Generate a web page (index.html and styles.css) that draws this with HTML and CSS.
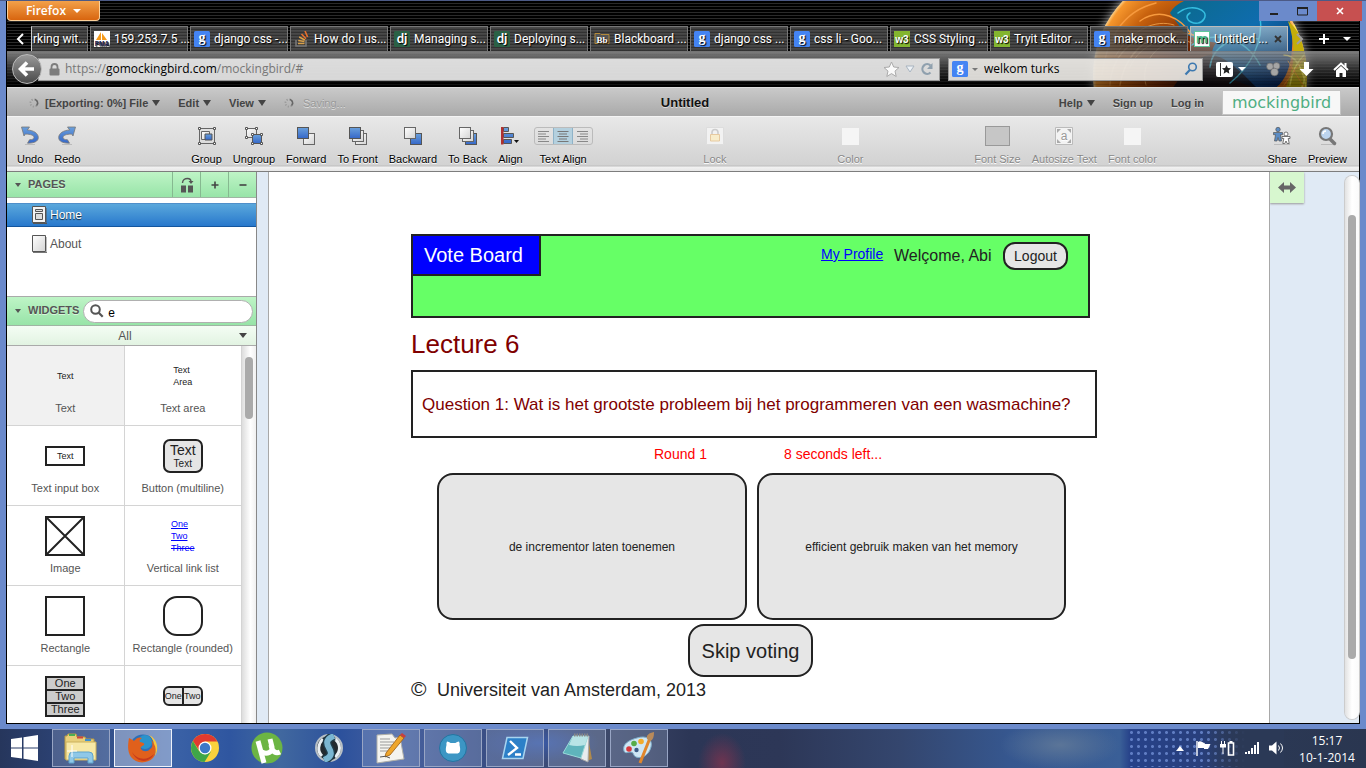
FILE: index.html
```html
<!DOCTYPE html>
<html lang="en">
<head>
<meta charset="utf-8">
<title>Untitled - Mockingbird</title>
<link rel="stylesheet" href="styles.css">
</head>
<body>
<svg class="defs" aria-hidden="true">
  <defs>
    <linearGradient id="blue" x1="0" y1="0" x2="0" y2="1"><stop offset="0" stop-color="#6aa0dc"/><stop offset="1" stop-color="#3567c8"/></linearGradient>
    <linearGradient id="pale" x1="0" y1="0" x2="1" y2="1"><stop offset="0" stop-color="#fff"/><stop offset="1" stop-color="#d4d4d4"/></linearGradient>
    <symbol id="spin" viewBox="0 0 10 10"><circle cx="5" cy="5" r="3.6" fill="none" stroke="#999" stroke-width="1.8" stroke-dasharray="1.2 1.6"/><path d="M6 1.5A3.6 3.6 0 0 1 7.5 7.6" fill="none" stroke="#666" stroke-width="1.6"/></symbol>
    <symbol id="goog" viewBox="0 0 16 16"><rect width="16" height="16" rx="1.5" fill="#4484f3"/><text x="8" y="11" text-anchor="middle" font-family="Liberation Serif, serif" font-weight="bold" font-size="14" fill="#fff">g</text></symbol>
    <symbol id="dj" viewBox="0 0 16 16"><rect width="16" height="16" rx="1.5" fill="#2b6145"/><text x="8" y="12" text-anchor="middle" font-family="Lato, sans-serif" font-weight="bold" font-size="13" fill="#fff">dj</text></symbol>
    <symbol id="w3" viewBox="0 0 16 16"><rect width="16" height="16" fill="#83b52f"/><text x="8" y="12" text-anchor="middle" font-family="Liberation Sans, sans-serif" font-weight="bold" font-size="10" fill="#fff">w3</text></symbol>
    <symbol id="sq" viewBox="0 0 12 12"><rect x=".5" y=".5" width="11" height="11" fill="url(#pale)" stroke="#666"/></symbol>
    <symbol id="sqb" viewBox="0 0 12 12"><rect x=".5" y=".5" width="11" height="11" fill="url(#blue)" stroke="#555"/></symbol>
  </defs>
</svg>

<div class="window">
 <div class="inner">
  <header class="chrome">
    <svg class="persona" viewBox="0 0 280 86" aria-hidden="true">
      <defs>
        <radialGradient id="ember" gradientUnits="userSpaceOnUse" cx="140" cy="74" r="108"><stop offset="0" stop-color="#2a0f04"/><stop offset=".35" stop-color="#7a2a04"/><stop offset=".75" stop-color="#c8620e"/><stop offset=".96" stop-color="#f6962c"/><stop offset="1" stop-color="#ffe0a0"/></radialGradient>
        <linearGradient id="sea" x1="0" y1="0" x2="1" y2="1"><stop offset="0" stop-color="#0a6a88"/><stop offset=".5" stop-color="#0f6cae"/><stop offset="1" stop-color="#081c58"/></linearGradient>
        <filter id="soft" x="-20%" y="-20%" width="140%" height="140%"><feGaussianBlur stdDeviation="5"/></filter>
        <clipPath id="ball"><circle cx="140" cy="74" r="107"/></clipPath>
      </defs>
      <circle cx="140" cy="74" r="108" fill="#fff" opacity=".55" filter="url(#soft)"/>
      <circle cx="140" cy="74" r="107" fill="url(#ember)"/>
      <g clip-path="url(#ball)">
        <path d="M110 12C118-4 150-10 190-6s44 30 42 54-10 40-28 44c-10-8-30-10-40-20s-16-20-8-30c-14-4-30-4-36-16z" fill="url(#sea)"/>
        <path d="M150 54c16 0 34 20 50 36h-90c8-8 20-34 40-36z" fill="#0a0b14" opacity=".85"/>
        <path d="M228 20c22 20 24 44 18 70h-22c12-24 12-46 4-70z" fill="#c4ae0a"/>
        <g fill="none" stroke-linecap="round">
          <path d="M42 74C46 40 62 10 96 2M50 84c2-34 30-56 66-50M60 84c8-50 60-64 84-44M80 20c20-14 40-4 52 14" stroke="#f79a3e" stroke-width="1.5"/>
          <path d="M70 66c10-24 40-34 62-24M86 84c-6-20 8-44 40-46M56 54c16-26 40-36 58-30" stroke="#ffb45a" opacity=".7"/>
          <path d="M118 12c12-10 32-4 26 6s-24 0-14-6M132 44c20-14 52-10 68 20M150 66c2-20 24-34 48-28M170 82c20-16 34-40 30-68" stroke="#35bde0" stroke-width="1.5"/>
          <path d="M234 24c14 18 16 40 8 62M224 54c10 0 18 10 22 32M230 84c2-16 8-24 14-30" stroke="#fff04a" stroke-width="1.5"/>
          <path d="M224 84l22-30M228 60l16 26" stroke="#ff9a1e"/>
        </g>
      </g>
    </svg>
    <div class="titlebar">
      <button class="firefox">Firefox <span class="tri"></span></button>
      <div class="winctl">
        <button class="wc" aria-label="Minimize"><svg width="10" height="12" viewBox="0 0 10 12"><path d="M1 9h8" stroke="#222" stroke-width="2"/></svg></button>
        <button class="wc" aria-label="Maximize"><svg width="11" height="9" viewBox="0 0 11 9"><path d="M.5 1h10v7H.5z" fill="none" stroke="#222"/><path d="M0 1h11" stroke="#222" stroke-width="2"/></svg></button>
        <button class="wc close" aria-label="Close"><svg width="8" height="8" viewBox="0 0 8 8"><path d="M1 1l6 6M7 1L1 7" stroke="#fff" stroke-width="1.6"/></svg></button>
      </div>
    </div>
    <div class="tabs" role="tablist">
      <button class="scroll" aria-label="Scroll left"><svg width="8" height="12" viewBox="0 0 8 12"><path d="M7 1L2 6l5 5" fill="none" stroke="#fff" stroke-width="2"/></svg></button>
      <button class="tab cut" role="tab">rking wit...</button>
      <button class="tab" role="tab"><svg class="fav" viewBox="0 0 16 16"><path d="M0 0h16v16H0z" fill="#fff"/><path d="M2 9L7 1v8zM8 9V2l5 7z" fill="#f59b1c"/><text x="8" y="15" text-anchor="middle" font-family="Liberation Sans, sans-serif" font-weight="bold" font-size="6.500" fill="#222250">PMA</text></svg>159.253.7.5 ...</button>
      <button class="tab" role="tab"><svg class="fav"><use href="#goog"/></svg>django css -...</button>
      <button class="tab" role="tab"><svg class="fav" viewBox="0 0 16 16"><path d="M2 9v6h10V9" fill="none" stroke="#777" stroke-width="1.6"/><path d="M4 12.5h6.500M4.200 9.500l6.300 1M5.200 6l5.700 3" stroke="#d8a04a" stroke-width="1.500"/><path d="M7.500 3l4.500 4.800M11 0l2.600 6" stroke="#e8702c" stroke-width="1.600"/></svg>How do I us...</button>
      <button class="tab" role="tab"><svg class="fav"><use href="#dj"/></svg>Managing s...</button>
      <button class="tab" role="tab"><svg class="fav"><use href="#dj"/></svg>Deploying s...</button>
      <button class="tab" role="tab"><svg class="fav" viewBox="0 0 16 16"><path d="M1 2.500h5l1 1h8v9H1z" fill="#555" stroke="#b48a3a"/><text x="8" y="11.500" text-anchor="middle" font-family="Liberation Serif, serif" font-weight="bold" font-size="9" fill="#fff">Bb</text></svg>Blackboard ...</button>
      <button class="tab" role="tab"><svg class="fav"><use href="#goog"/></svg>django css ...</button>
      <button class="tab" role="tab"><svg class="fav"><use href="#goog"/></svg>css li - Goo...</button>
      <button class="tab" role="tab"><svg class="fav"><use href="#w3"/></svg>CSS Styling ...</button>
      <button class="tab" role="tab"><svg class="fav"><use href="#w3"/></svg>Tryit Editor ...</button>
      <button class="tab" role="tab"><svg class="fav"><use href="#goog"/></svg>make mock...</button>
      <button class="tab active" role="tab" aria-selected="true"><svg class="fav" viewBox="0 0 16 16"><rect x=".5" y=".5" width="15" height="15" fill="#fff" stroke="#5fc79b"/><text x="8" y="12" text-anchor="middle" font-family="Open Sans, sans-serif" font-weight="bold" font-size="12" fill="#49b98a">m</text></svg><span class="tabname">Untitled ...</span><svg width="8" height="8" viewBox="0 0 8 8"><path d="M1 1l6 6M7 1L1 7" stroke="#333" stroke-width="1.800"/></svg></button>
      <div class="tabend">
        <button class="bare" aria-label="Scroll right"><svg width="8" height="12" viewBox="0 0 8 12"><path d="M1 1l5 5-5 5" fill="none" stroke="#a0a0a0" stroke-width="2"/></svg></button>
        <button class="bare" aria-label="New tab"><svg width="12" height="12" viewBox="0 0 12 12"><path d="M6 1v10M1 6h10" stroke="#fff" stroke-width="2"/></svg></button>
        <button class="bare" aria-label="All tabs"><span class="tri"></span></button>
      </div>
    </div>
    <div class="nav">
      <button class="back" aria-label="Back"><svg width="18" height="18" viewBox="0 0 18 18"><path d="M9 2.500L2.500 9 9 15.500M3 9h13" fill="none" stroke="#fff" stroke-width="3.600"/></svg></button>
      <div class="url">
        <svg width="11" height="13" viewBox="0 0 11 13"><path d="M2.500 6V4a3 3 0 0 1 6 0v2" fill="none" stroke="#7d7d7d" stroke-width="1.800"/><rect x=".5" y="5.500" width="10" height="7" rx="1" fill="#7d7d7d"/></svg>
        <div class="address" role="textbox" aria-label="Address" contenteditable="true">https://<b>gomockingbird.com</b>/mockingbird/#</div>
        <svg width="17" height="17" viewBox="0 0 17 17"><path d="M8.500 1l2.200 5 5.300.5-4 3.600 1.200 5.400-4.700-2.900-4.700 2.900L5 10.100 1 6.500 6.300 6z" fill="#fafafa" stroke="#aaa"/></svg>
        <svg width="10" height="8" viewBox="0 0 10 8"><path d="M1 1h8L5 7z" fill="#eef2f6" stroke="#a8b4c0"/></svg>
        <svg width="14" height="14" viewBox="0 0 14 14"><path d="M10.500 10.500A4.800 4.800 0 1 1 10.500 3.500" fill="none" stroke="#8fa0ae" stroke-width="2.200"/><path d="M12.500 1v6H7z" fill="#8fa0ae"/></svg>
      </div>
      <div class="find">
        <svg class="fav"><use href="#goog"/></svg><span class="tri grey"></span>
        <input class="q" type="text" aria-label="Search the web" value="welkom turks">
        <svg width="14" height="14" viewBox="0 0 14 14"><circle cx="8.500" cy="5" r="3.800" fill="none" stroke="#3d79b0" stroke-width="1.600"/><path d="M5.800 8L1.500 12.500" stroke="#3d79b0" stroke-width="2.200"/></svg>
      </div>
      <div class="navicons">
        <button class="bare mark" aria-label="Bookmarks"><svg width="17" height="15" viewBox="0 0 17 15"><rect width="17" height="15" rx="2" fill="#fff"/><path d="M4.500 1v13" stroke="#333"/><path d="M10.500 3l1.400 3 3.100.3-2.300 2.200.7 3.300-2.900-1.700-2.900 1.700.7-3.300L6 6.300 9.100 6z" fill="#222"/></svg><span class="tri"></span></button>
        <button class="bare" aria-label="Add-on"><svg width="15" height="15" viewBox="0 0 15 15"><g fill="#a5a5a5" stroke="#666" stroke-width=".6"><circle cx="4" cy="4.500" r="3.400"/><circle cx="10.500" cy="4" r="3.400"/><circle cx="8.500" cy="10" r="3.800"/></g></svg></button>
        <button class="bare" aria-label="Downloads"><svg width="16" height="16" viewBox="0 0 16 16"><path d="M5 1h5v7h4.500L7.500 15 .5 8H5z" fill="#fff"/></svg></button>
        <button class="bare" aria-label="Home"><svg width="16" height="15" viewBox="0 0 16 15"><path d="M1 8l7-6.500L15 8" fill="none" stroke="#fff" stroke-width="2"/><path d="M3 8.500L8 4l5 4.500V15h-3.500v-4h-3v4H3zM11.500 1h2v4h-2z" fill="#fff"/></svg></button>
      </div>
    </div>
  </header>

  <nav class="menubar">
    <div class="menus">
      <svg class="spin"><use href="#spin"/></svg>
      <button class="menu">[Exporting: 0%] File <span class="tri dark"></span></button>
      <button class="menu">Edit <span class="tri dark"></span></button>
      <button class="menu">View <span class="tri dark"></span></button>
      <svg class="spin"><use href="#spin"/></svg>
      <span class="saving">Saving...</span>
    </div>
    <h1 class="doc">Untitled</h1>
    <div class="menus end">
      <button class="menu">Help <span class="tri dark"></span></button>
      <a class="menu" href="#signup">Sign up</a>
      <a class="menu" href="#login">Log in</a>
      <a class="brand" href="#home">mockingbird</a>
    </div>
  </nav>

  <div class="toolbar">
    <div class="group">
      <button class="tool"><svg width="20" height="20" viewBox="0 0 20 20"><path d="M5 18.500h10" stroke="#bbb"/><path d="M1.500 1h8L7.300 4c6.200.2 11 3.400 11 7.600 0 3.600-3.800 5.600-10.800 5.600l2-3.400c3-.2 4.500-1 4.500-2.400 0-2-3-3.300-8.800-3.300L4 10z" fill="url(#blue)" stroke="#777" stroke-width=".8"/></svg>Undo</button>
      <button class="tool"><svg width="20" height="20" viewBox="0 0 20 20"><path d="M5 18.500h10" stroke="#bbb"/><path d="M18.500 1h-8l2.200 3c-6.200.2-11 3.400-11 7.600 0 3.600 3.800 5.600 10.800 5.600l-2-3.400c-3-.2-4.500-1-4.500-2.400 0-2 3-3.300 8.800-3.300L16 10z" fill="url(#blue)" stroke="#777" stroke-width=".8"/></svg>Redo</button>
    </div>
    <div class="group">
      <button class="tool"><svg width="20" height="20" viewBox="0 0 20 20"><path d="M2.500 2.500h15v15h-15z" fill="none" stroke="#666"/><path d="M4.500 5.500h8v8h-8z" fill="url(#pale)" stroke="#666"/><path d="M8 8h7v6H8z" fill="url(#blue)" stroke="#555"/><path d="M1.500 1.500h2v2h-2zM16.500 1.500h2v2h-2zM1.500 16.500h2v2h-2zM16.500 16.500h2v2h-2z" fill="#fff" stroke="#555"/></svg>Group</button>
      <button class="tool"><svg width="20" height="20" viewBox="0 0 20 20"><path d="M2.500 2.500h10v9h-10z" fill="url(#pale)" stroke="#666"/><path d="M8.500 8.500h9v9h-9z" fill="url(#blue)" stroke="#555"/><path d="M1.500 1.500h2v2h-2zM11.500 1.500h2v2h-2zM1.500 10.500h2v2h-2zM7.500 7.500h2v2h-2zM16.500 7.500h2v2h-2zM7.500 16.500h2v2h-2zM16.500 16.500h2v2h-2z" fill="#fff" stroke="#555"/></svg>Ungroup</button>
      <button class="tool"><svg width="20" height="20" viewBox="0 0 20 20"><use href="#sq" x="7" y="7" width="12" height="12"/><use href="#sqb" x="1" y="1" width="12" height="12"/></svg>Forward</button>
      <button class="tool"><svg width="20" height="20" viewBox="0 0 20 20"><use href="#sq" x="7" y="7" width="12" height="12"/><use href="#sq" x="4" y="4" width="12" height="12"/><use href="#sqb" x="1" y="1" width="12" height="12"/></svg>To Front</button>
      <button class="tool"><svg width="20" height="20" viewBox="0 0 20 20"><use href="#sqb" x="7" y="7" width="12" height="12"/><use href="#sq" x="1" y="1" width="12" height="12"/></svg>Backward</button>
      <button class="tool"><svg width="20" height="20" viewBox="0 0 20 20"><use href="#sqb" x="7" y="7" width="12" height="12"/><use href="#sq" x="4" y="4" width="12" height="12"/><use href="#sq" x="1" y="1" width="12" height="12"/></svg>To Back</button>
      <button class="tool"><svg width="20" height="20" viewBox="0 0 20 20"><path d="M3.500 1.500h5v4h-5zM3.500 7.500h10v4h-10zM3.500 13.500h8v4h-8z" fill="url(#blue)" stroke="#555"/><path d="M1 1h2.500v17.500H1z" fill="#b03030"/><path d="M14 14h5l-2.500 3z" fill="#111"/></svg>Align</button>
      <div class="tool">
        <div class="seg" role="group" aria-label="Text Align">
          <button class="segbtn" aria-label="Left"><svg width="12" height="11" viewBox="0 0 12 11"><path d="M0 .5h11M0 3h8M0 5.500h11M0 8h8M0 10.500h11" stroke="#888"/></svg></button>
          <button class="segbtn on" aria-label="Center"><svg width="12" height="11" viewBox="0 0 12 11"><path d="M.5 .5h11M2 3h8M.5 5.500h11M2 8h8M.5 10.500h11" stroke="#777"/></svg></button>
          <button class="segbtn" aria-label="Right"><svg width="12" height="11" viewBox="0 0 12 11"><path d="M1 .5h11M4 3h8M1 5.500h11M4 8h8M1 10.500h11" stroke="#888"/></svg></button>
        </div>Text Align
      </div>
    </div>
    <div class="group"><button class="tool off" disabled><svg width="20" height="20" viewBox="0 0 20 20"><path d="M1.500 1.500h17v17h-17z" fill="#f2f2f2" stroke="#ddd"/><path d="M7 9V6.500a3 3 0 0 1 6 0V9" fill="none" stroke="#ccc" stroke-width="1.600"/><path d="M5.500 8.500h9v6.500h-9z" fill="#f8edcb" stroke="#e6c9a0"/></svg>Lock</button></div>
    <div class="group"><button class="tool off" disabled><svg width="20" height="20" viewBox="0 0 20 20"><path d="M2 2h17v17H2z" fill="#f5f5f5"/></svg>Color</button></div>
    <div class="group">
      <label class="tool off"><input class="size" type="text" disabled>Font Size</label>
      <button class="tool off" disabled><svg width="20" height="20" viewBox="0 0 20 20"><path d="M1.500 1.500h17v17h-17z" fill="#f3f3f3" stroke="#bbb"/><path d="M3 3h4L3 7zM17 3v4l-4-4zM3 17v-4l4 4zM17 17h-4l4-4z" fill="#aaa"/><text x="10" y="14" text-anchor="middle" font-family="Liberation Sans, sans-serif" font-size="12" fill="#999">a</text></svg>Autosize Text</button>
      <button class="tool off" disabled><svg width="20" height="20" viewBox="0 0 20 20"><path d="M2 2h17v17H2z" fill="#f5f5f5"/></svg>Font color</button>
    </div>
    <div class="group">
      <button class="tool"><svg width="20" height="20" viewBox="0 0 20 20"><path d="M2 18.500h16" stroke="#bbb"/><circle cx="6" cy="3.500" r="2.200" fill="#5b8cc4" stroke="#555" stroke-width=".7"/><path d="M1.500 6.500h9v2.200H8.500L9.500 15H7l-1-3.500L5 15H2.500l1-6.300h-2z" fill="#5b8cc4" stroke="#555" stroke-width=".7"/><circle cx="14" cy="8" r="2" fill="#fff" stroke="#555" stroke-width=".8"/><path d="M10 10.500h8v2h-1.800l1 5h-2L14 15l-1.200 2.500h-2l1-5H10z" fill="#fff" stroke="#555" stroke-width=".8"/></svg>Share</button>
      <button class="tool"><svg width="20" height="20" viewBox="0 0 20 20"><path d="M4 18.500h12" stroke="#bbb"/><path d="M12.500 12.500l5 5" stroke="#777" stroke-width="3.500" stroke-linecap="round"/><circle cx="9" cy="8" r="6" fill="#bcd4ee" stroke="#777" stroke-width="2.200"/><path d="M6 8a3 3 0 0 1 3-3" fill="none" stroke="#fff" stroke-width="1.500"/></svg>Preview</button>
    </div>
  </div>

  <main class="work">
    <aside class="side">
      <div class="shead">
        <span class="tri tiny"></span><h2 class="stitle">Pages</h2>
        <div class="pagebtns">
          <button class="pb" aria-label="Move page"><svg width="14" height="16" viewBox="0 0 14 16"><path d="M1 8.500h5v7H1zM8 8.500h5v7H8z" fill="#555"/><path d="M2.500 6C2.500 3 5 1.500 7.500 1.500S11 3 11 5" fill="none" stroke="#555" stroke-width="1.400"/><path d="M8.500 4h5L11 7z" fill="#555"/></svg></button>
          <button class="pb" aria-label="Add page"><svg width="8" height="8" viewBox="0 0 8 8"><path d="M4 .5v7M.5 4h7" stroke="#444" stroke-width="1.600"/></svg></button>
          <button class="pb" aria-label="Remove page"><svg width="8" height="8" viewBox="0 0 8 8"><path d="M.5 4h7" stroke="#444" stroke-width="1.600"/></svg></button>
        </div>
      </div>
      <ul class="pages">
        <li><a class="pg on" href="#p1"><svg width="15" height="18" viewBox="0 0 15 18"><path d="M.5 .5h13v16H.5z" fill="#f4f4f4" stroke="#555"/><path d="M1 17.500h14V2" fill="none" stroke="#555"/><path d="M3.500 3.500h7v2h-7zM3.500 7.500h7v6h-7z" fill="#ddd" stroke="#555"/></svg>Home</a></li>
        <li><a class="pg" href="#p2"><svg width="15" height="18" viewBox="0 0 15 18"><path d="M.5 .5h13v16H.5z" fill="url(#pale)" stroke="#555"/><path d="M1 17.500h14V2" fill="none" stroke="#777"/></svg>About</a></li>
      </ul>
      <div class="shead widgets">
        <span class="tri tiny"></span><h2 class="stitle">Widgets</h2>
        <label class="wsearch"><svg width="14" height="14" viewBox="0 0 14 14"><circle cx="5.500" cy="5.500" r="4.300" fill="none" stroke="#555" stroke-width="2"/><path d="M8.700 8.700l4 4" stroke="#555" stroke-width="2.200"/></svg><input class="wq" type="text" aria-label="Find widgets" value="e"></label>
      </div>
      <button class="all"><span>All</span><span class="tri dark big"></span></button>
      <div class="list">
        <div class="grid">
          <div class="w sel"><div class="pic t9">Text</div>Text</div>
          <div class="w"><div class="pic t9"><span>Text<br>Area</span></div>Text area</div>
          <div class="w"><div class="pic t9"><span class="boxed">Text</span></div>Text input box</div>
          <div class="w"><div class="pic"><span class="multi"><span>Text</span><small>Text</small></span></div>Button (multiline)</div>
          <div class="w"><div class="pic"><svg width="40" height="40" viewBox="0 0 40 40"><path d="M1 1h38v38H1zM1 1l38 38M39 1L1 39" fill="none" stroke="#222" stroke-width="2"/></svg></div>Image</div>
          <div class="w"><div class="pic t9"><span class="links"><a href="#1">One</a><a href="#2">Two</a><a class="last" href="#3">Three</a></span></div>Vertical link list</div>
          <div class="w"><div class="pic"><span class="rect"></span></div>Rectangle</div>
          <div class="w"><div class="pic"><span class="rect round"></span></div>Rectangle (rounded)</div>
          <div class="w"><div class="pic"><span class="stack"><span>One</span><span>Two</span><span>Three</span></span></div></div>
          <div class="w"><div class="pic t9"><span class="duo"><span>One</span><span>Two</span></span></div></div>
        </div>
        <div class="track"><div class="thumb short"></div></div>
      </div>
    </aside>

    <section class="canvas">
      <div class="sheet">
        <div class="item banner"></div>
        <div class="item logo">Vote Board</div>
        <a class="item profile" href="#profile">My Profile</a>
        <div class="item welcome">Welçome, Abi</div>
        <button class="item btn logout">Logout</button>
        <h2 class="item lecture">Lecture 6</h2>
        <div class="item question">Question 1: Wat is het grootste probleem bij het programmeren van een wasmachine?</div>
        <div class="item red roundno">Round 1</div>
        <div class="item red timer">8 seconds left...</div>
        <button class="item btn answer first">de incrementor laten toenemen</button>
        <button class="item btn answer second">efficient gebruik maken van het memory</button>
        <button class="item btn skip">Skip voting</button>
        <div class="item copy">©</div>
        <div class="item uva">Universiteit van Amsterdam, 2013</div>
      </div>
      <div class="gutter"><button class="handle" aria-label="Resize"><svg width="18" height="11" viewBox="0 0 18 11"><path d="M0 5.500L6 0v3.500h6V0l6 5.500L12 11V7.500H6V11z" fill="#666"/></svg></button></div>
      <div class="track main"><div class="thumb long"></div></div>
    </section>
  </main>
 </div>
</div>

<footer class="taskbar">
  <button class="start" aria-label="Start"><svg width="27" height="26" viewBox="0 0 27 26"><path d="M0 4l11-1.600v10H0zM12.500 2.200L27 0v12.400H12.500zM0 13.600h11v10L0 22zM12.500 13.600H27V26l-14.500-2.200z" fill="#fff"/></svg></button>
  <button class="task open" aria-label="File Explorer"><svg width="34" height="32" viewBox="0 0 34 32"><path d="M1 4h2l1-2h8l1 3h8l1 2h8v20H1z" fill="#e8cf7a" stroke="#b99a44"/><path d="M5 3h6" stroke="#4caf50" stroke-width="2"/><path d="M13 5.500h6" stroke="#d0453c" stroke-width="2"/><path d="M21 8h6" stroke="#3d8ed0" stroke-width="2"/><path d="M2 10h30v18H2z" fill="#f7e8a6" stroke="#cbb05c"/><path d="M5 31V24q0-4 4-4h16q4 0 4 4v7h-5v-5H10v5z" fill="#8fc8e8" stroke="#5fa3cc"/><path d="M8 13v12M3 19h10" stroke="#fff"/></svg></button>
  <button class="task open current" aria-label="Firefox"><svg width="32" height="32" viewBox="0 0 32 32"><circle cx="16" cy="16" r="13.500" fill="#2d6fb8"/><circle cx="18" cy="10" r="7" fill="#2a93cc"/><path d="M2 6c2 1 4 2 5 3 3-4 6-4 8-3-2 1-3 3-2 4 3 1 5 1 4 3-2 1-4 2-3 4 2 3 7 3 9 0 3-1 3-6 1-9 5 3 7 12 2 18-6 6-17 6-22-1C0 19 1 12 2 6z" fill="#e0601c"/><path d="M22 3c9 4 10 15 6 21 1-5 1-9-1-12-1-4-2-6-5-9z" fill="#f8c63c"/><path d="M5 20c5 8 15 9 22 2-4 9-17 10-22-2z" fill="#c73a1c"/></svg></button>
  <button class="task" aria-label="Chrome"><svg width="28" height="28" viewBox="0 0 28 28"><circle cx="14" cy="14" r="14" fill="#fbd23c"/><path d="M14 7.500h12.400A14 14 0 0 0 1.900 7L8 16z" fill="#e03a30"/><path d="M1.900 7A14 14 0 0 0 13.500 28L20 17.500 14 20.500 8 17z" fill="#3fa648"/><circle cx="14" cy="14" r="6.500" fill="#fff"/><circle cx="14" cy="14" r="5.200" fill="#3c78c8"/></svg></button>
  <button class="task" aria-label="uTorrent"><svg width="32" height="32" viewBox="0 0 32 32"><circle cx="16" cy="16" r="15.500" fill="#6cb544"/><g fill="none" stroke="#fff" stroke-width="5"><path d="M7 9l6 22"/><path d="M11 20c5 3 11 0 10-5L19 7M20 13c1 7 5 9 9 7"/></g></svg></button>
  <button class="task" aria-label="SopCast"><svg width="28" height="28" viewBox="0 0 28 28"><circle cx="14" cy="14" r="13" fill="#222a30" stroke="#b8c0c6" stroke-width="2"/><path d="M8 5c-5 5-6 12-1 17M20 5c6 5 6 13 0 18" fill="none" stroke="#e8eef2" stroke-width="3"/><path d="M19 2c-8 3-8 7-5 12s3 9-5 12" fill="none" stroke="#1f3a48" stroke-width="9"/><path d="M19 2c-8 3-8 7-5 12s3 9-5 12" fill="none" stroke="#7ab6d2" stroke-width="6"/></svg></button>
  <button class="task open" aria-label="Editor"><svg width="30" height="32" viewBox="0 0 30 32"><path d="M1 3l15-1 3 4 5-1 4 22-27 4z" fill="#f4f4f0" stroke="#b0b0a8"/><path d="M4 7h10M4 10h14M4 13h12M4 16h11M4 19h8" stroke="#999"/><path d="M10 21L24 3l4 3-14 17-5 2z" fill="#eea62c" stroke="#9a5a10" stroke-width=".8"/><path d="M24 3l2-2 4 3-2 2z" fill="#c8403c"/><path d="M4 25q6-2 10 1" fill="none" stroke="#555"/></svg></button>
  <button class="task open" aria-label="GitHub"><svg width="28" height="28" viewBox="0 0 28 28"><circle cx="14" cy="14" r="13.500" fill="#3c96c4" stroke="#2474a0"/><path d="M8 7.500q2 .2 3.600 1.500h4.800Q18 7.700 20 7.500q1 2 .5 3.500c1.500 6 .5 8.500-3 8.500h-7c-3.500 0-4.500-2.500-3-8.500Q7 9.500 8 7.500z" fill="#fff"/></svg></button>
  <button class="task open" aria-label="PowerShell"><svg width="28" height="24" viewBox="0 0 28 24"><path d="M6 1.500h20.500L22 22.500H1.500z" fill="#2c80c8" stroke="#a8d4f0" stroke-width="1.500"/><path d="M9 5l7 7-9 7M14 18.500h6" fill="none" stroke="#fff" stroke-width="2.400"/></svg></button>
  <button class="task open" aria-label="Notepad"><svg width="30" height="30" viewBox="0 0 30 30"><path d="M26 4l4 22-5 2z" fill="#b08a4c"/><path d="M12 3h15l-1 26-7-3z" fill="#e8ecee" stroke="#a8a8a8"/><path d="M11 3h15l-7 22-18-5z" fill="#5fb4bc" stroke="#9adada"/><path d="M11 3h15l-3 9q-8 2-16 0z" fill="#b8e4e6"/><path d="M12 2h14" stroke="#888" stroke-width="3" stroke-dasharray="1.500 1"/></svg></button>
  <button class="task open" aria-label="Paint"><svg width="32" height="32" viewBox="0 0 32 32"><path d="M14 6c9-3 16 1 14 9s-9 12-15 10c-3-1-2-5-5-5s-6 2-7-1C-1 12 6 8 14 6z" fill="#cfe6f4" stroke="#7fb0cc"/><circle cx="6" cy="17" r="2.800" fill="#d8383c"/><circle cx="11" cy="11.500" r="2.800" fill="#56ac48"/><circle cx="18" cy="9.500" r="2.800" fill="#f2ab2c"/><circle cx="13.500" cy="18" r="2.200" fill="#3b5b86"/><path d="M27 6L17 31" stroke="#e0862c" stroke-width="3"/><path d="M24 7c-1-4 2-6 7-7 0 5-1 8-4 9z" fill="#b98a5a"/></svg></button>
  <div class="tray">
    <button class="bare" aria-label="Show hidden icons"><svg width="8" height="5" viewBox="0 0 8 5"><path d="M0 5l4-5 4 5z" fill="#fff"/></svg></button>
    <svg width="15" height="16" viewBox="0 0 15 16"><path d="M1 1v15" stroke="#fff" stroke-width="1.400"/><path d="M2 2c3-2 4 1 7 1l-.5 1h6L12 9H8V8H2z" fill="#fff"/></svg>
    <svg width="16" height="16" viewBox="0 0 16 16"><path d="M8.500 3h5v12h-5z" fill="none" stroke="#fff" stroke-width="1.600"/><path d="M9.500 1h3v2h-3zM1 1h1v3H1zM4 1h1v3H4zM0 4h6v3.500H0zM2.500 7h1v7h-1z" fill="#fff"/></svg>
    <svg width="15" height="12" viewBox="0 0 15 12"><path d="M0 10h2v2H0zM3 9h2v3H3zM6 6h2v6H6zM9 3h2v9H9zM12 0h2v12h-2z" fill="#fff"/></svg>
    <svg width="15" height="14" viewBox="0 0 15 14"><path d="M0 4.500h3L7.500 .5v13L3 9.500H0z" fill="#fff"/><path d="M9.500 4.500q2 2.500 0 5M11.500 2.500q4 4.500 0 9" fill="none" stroke="#fff"/></svg>
  </div>
  <time class="clock" datetime="2014-01-10T15:17"><span>15:17</span><span>10-1-2014</span></time>
</footer>
</body>
</html>
```

FILE: styles.css
```css
* { box-sizing: border-box; }
body {
  margin: 0;
  height: 100vh;
  display: flex;
  flex-direction: column;
  overflow: hidden;
  background: #6b8acb;
  font: 11px/14px "Liberation Sans", Arial, sans-serif;
  color: #555;
}
button, input { font: inherit; color: inherit; border: 0; padding: 0; margin: 0; background: none; }
svg { flex: none; display: block; }
a { color: inherit; text-decoration: none; }
h1, h2, ul { margin: 0; padding: 0; list-style: none; font-weight: normal; }
.defs { position: absolute; width: 0; height: 0; }

.tri {
  display: inline-block;
  flex: none;
  border: solid transparent;
  border-width: 4px 4px 0;
  border-top-color: #fff;
}
.tri.dark { border-top-color: #444; border-top-width: 6px; }
.tri.grey { border-width: 3px 3px 0; border-top-color: #777; }
.tri.tiny { border-width: 4px 3px 0; border-top-color: #555; }
.tri.dark.big { border-width: 5px 4px 0; }

/* browser window */
.window {
  flex: 1;
  min-height: 0;
  display: flex;
  padding: 1px 6px 5px;
  background: linear-gradient(#4c5a86 0 1px, #6b8acb 1px);
}
.inner {
  flex: 1;
  min-width: 0;
  display: flex;
  flex-direction: column;
  border: solid #000;
  border-width: 0 1px 1px;
}
.chrome {
  position: relative;
  flex: none;
  color: #fff;
  font: 12px/16px "Open Sans", "Noto Sans", sans-serif;
  background: repeating-linear-gradient(#000 0 2px, #2a2a2a 2px 3px);
}
.persona { position: absolute; top: 0; right: 19px; width: 280px; height: 86px; }
.titlebar, .tabs, .nav { position: relative; display: flex; }
.titlebar { height: 25px; align-items: flex-start; justify-content: space-between; }
.firefox {
  display: flex;
  align-items: center;
  justify-content: center;
  gap: 7px;
  width: 93px;
  height: 20px;
  font-weight: 600;
  border: 1px solid #fbd09a;
  border-top: 0;
  border-radius: 0 0 4px 4px;
  background: linear-gradient(#f3a14a, #d8650f);
}
.winctl { display: flex; height: 20px; margin-right: -3px; }
.wc { display: flex; align-items: center; justify-content: center; width: 29px; background: #6b8acb; }
.wc.close { width: 45px; background: #c75050; }

.tabs { height: 25px; gap: 2px; }
.scroll { flex: none; width: 22px; padding-left: 4px; display: flex; align-items: center; justify-content: center; }
.tab {
  flex: 1 1 98px;
  min-width: 0;
  display: flex;
  align-items: center;
  gap: 4px;
  padding: 0 2px 0 3px;
  font-family: Roboto, "Open Sans", sans-serif;
  white-space: nowrap;
  text-shadow: 1px 1px 1px #000;
  border: solid #777;
  border-width: 1px 1px 0;
  background: repeating-linear-gradient(rgba(78,78,78,.85) 0 2px, rgba(58,58,58,.85) 2px 3px);
}
.tab.cut { flex: none; width: 57px; padding: 0 0 0 1px; border-left-color: #ccc; }
.tab.active { padding-right: 5px; background: linear-gradient(rgba(200,210,215,.6), rgba(120,140,150,.5)); border-color: #bbb; }
.tabname { flex: 1; text-align: left; }
.fav { width: 16px; height: 16px; }
.tabend { flex: none; width: 69px; display: flex; align-items: center; justify-content: space-between; padding: 0 8px 0 6px; }
.bare { display: flex; align-items: center; gap: 5px; }

.nav {
  height: 36px;
  align-items: center;
  padding: 0 10px 0 5px;
  background: repeating-linear-gradient(rgba(0,0,0,.12) 0 1px, transparent 1px 3px), linear-gradient(rgba(150,150,150,.85), rgba(90,90,90,.5) 50%, rgba(0,0,0,.5) 90%);
}
.back {
  position: relative;
  flex: none;
  display: flex;
  align-items: center;
  justify-content: center;
  width: 30px;
  height: 30px;
  border: 1px solid #bbb;
  border-radius: 50%;
  background: linear-gradient(#999, #4a4a4a);
}
.url, .find { display: flex; align-items: center; height: 23px; background: rgba(228,228,228,.94); border: 1px solid #999; }
.url { flex: 1; gap: 5px; margin-left: -4px; padding: 0 5px 0 10px; }
.address { flex: 1; color: #777; outline: 0; }
.address b { font-weight: normal; color: #000; }
.find { width: 255px; margin-left: 8px; padding: 0 4px 0 3px; gap: 4px; color: #000; background: rgba(238,236,232,.9); }
.q { flex: 1; min-width: 0; padding-left: 2px; }
.navicons { flex: none; width: 133px; margin-left: 13px; display: flex; justify-content: space-between; align-items: center; }
.mark { margin-right: 2px; }

/* application menu */
.menubar {
  flex: none;
  display: grid;
  grid-template-columns: 1fr auto 1fr;
  align-items: center;
  height: 29px;
  padding: 0 18px 0 22px;
  font: bold 11px/16px "Liberation Sans", Arial, sans-serif;
  color: #444;
  text-shadow: 0 1px 0 #ddd;
  border-top: 1px solid #ddd;
  background: linear-gradient(#c9c9c9, #a9a9a9);
}
.menus { display: flex; align-items: center; gap: 18px; white-space: nowrap; padding-top: 1px; }
.menus.end { justify-content: flex-end; }
.menu { display: flex; align-items: center; gap: 4px; }
.spin { width: 10px; height: 10px; margin-right: -12px; }
.saving { margin-left: 3px; font-weight: normal; color: #999; }
.doc { padding-top: 2px; font-size: 13px; font-weight: bold; color: #111; }
.brand {
  display: flex;
  align-items: center;
  justify-content: center;
  width: 119px;
  height: 25px;
  font: 16px/20px "DejaVu Sans", sans-serif;
  color: #4fae82;
  text-shadow: none;
  border: 1px solid #c4c4c4;
  background: #f7f7f7;
}

/* tool strip */
.toolbar {
  flex: none;
  display: flex;
  justify-content: space-between;
  height: 56px;
  padding: 9px 12px 0 10px;
  color: #000;
  border-top: 1px solid #f4f4f4;
  border-bottom: 1px solid #7d7d7d;
  background: linear-gradient(#e8e8e8, #d2d2d2 48px, #bdbdbd 49px, #f2f2f2 50px, #e4e4e4 55px);
}
.group { display: flex; gap: 11px; }
.tool { display: flex; flex-direction: column; align-items: center; gap: 6px; height: 40px; white-space: nowrap; line-height: 14px; text-shadow: 0 1px 0 #fff; }
.tool.off { color: #888; }
.size { width: 25px; height: 20px; border: 1px solid #999; background: #c6c6c6; }
.seg { display: flex; width: 59px; height: 18px; margin: 1px 0; border: 1px solid #bbb; border-radius: 3px; }
.segbtn { flex: 1; display: flex; align-items: center; justify-content: center; }
.segbtn.on { background: #b4d0de; border: solid #8fb3c8; border-width: 0 1px; }

/* side column */
.work { flex: 1; min-height: 0; display: flex; }
.side { flex: none; width: 250px; display: flex; flex-direction: column; background: #fff; border-right: 1px solid #888; }
.shead {
  flex: none;
  display: flex;
  align-items: center;
  height: 26px;
  padding-left: 8px;
  border-bottom: 1px solid #9fb5a3;
  background: linear-gradient(#bef4c6, #98e4a8);
}
.stitle { margin-left: 7px; font-size: 11px; line-height: 16px; padding-bottom: 2px; font-weight: bold; text-transform: uppercase; text-shadow: 0 1px 0 #d5f8da; }
.pagebtns { display: flex; align-self: stretch; margin-left: auto; }
.pb { display: flex; align-items: center; justify-content: center; width: 28px; border-left: 1px solid #86b890; }
.pages { flex: none; height: 98px; padding-top: 5px; font-size: 12px; }
.pg { display: flex; align-items: center; gap: 3px; height: 24px; margin-bottom: 5px; padding-left: 25px; }
.pg.on {
  color: #fff;
  text-shadow: 0 1px 1px #123;
  border: solid #4f8fca;
  border-width: 1px 0;
  border-bottom-color: #14569e;
  background: linear-gradient(#5aa8dc, #2878cc);
}
.widgets { height: 30px; border-top: 1px solid #aaa; padding-right: 3px; }
.wsearch {
  flex: 1;
  min-width: 0;
  display: flex;
  align-items: center;
  gap: 4px;
  height: 23px;
  margin-left: 4px;
  padding: 0 6px;
  border: 1px solid #b0b0b0;
  border-radius: 12px;
  background: #fff;
}
.wq { flex: 1; min-width: 0; font-size: 12px; color: #000; padding-top: 4px; outline: 0; }
.all {
  flex: none;
  display: grid;
  grid-template-columns: 1fr auto;
  align-items: center;
  height: 20px;
  padding: 0 9px 0 4px;
  font-size: 12px;
  border-bottom: 1px solid #aaa;
  background: linear-gradient(#f4fdf4, #e2f3e2);
}
.list { flex: 1; min-height: 0; display: flex; overflow: hidden; }
.grid { flex: 1; display: grid; grid-template-columns: 1fr 1fr; grid-auto-rows: 80px; }
.w { display: flex; flex-direction: column; align-items: center; padding-top: 10px; border: solid #d4d4d4; border-width: 0 1px 1px 0; }
.w.sel { background: #f1f1f1; }
.pic { display: flex; align-items: center; justify-content: center; width: 100%; height: 40px; margin-bottom: 5px; color: #222; }
.t9 { font-size: 9px; line-height: 12px; }
.boxed { width: 40px; height: 20px; line-height: 16px; text-align: center; border: 2px solid #222; }
.multi { display: flex; flex-direction: column; align-items: center; justify-content: center; width: 40px; height: 34px; border: 2px solid #222; border-radius: 7px; background: #e5e5e5; font-size: 14px; line-height: 15px; }
.multi small { font-size: 10px; line-height: 11px; }
.links { display: flex; flex-direction: column; align-items: flex-start; color: #00f; }
.links a { text-decoration: underline; }
.links .last { text-decoration: line-through; }
.rect { width: 40px; height: 40px; border: 2px solid #222; }
.round { border-radius: 14px; }
.stack { display: flex; flex-direction: column; width: 40px; border: 2px solid #222; background: #ccc; text-align: center; line-height: 11px; }
.stack span + span { border-top: 2px solid #222; }
.duo { display: flex; width: 40px; height: 20px; line-height: 16px; border: 2px solid #222; border-radius: 6px; background: #e5e5e5; }
.duo span { flex: 1; text-align: center; }
.duo span + span { border-left: 2px solid #222; }

.track { flex: none; width: 14px; padding: 11px 3px 0; background: linear-gradient(90deg, #ddd, #fff 60%, #f0f0f0); }
.thumb { border-radius: 4px; background: #aaa; }
.thumb.short { height: 62px; }
.thumb.long { height: 446px; max-height: 88%; }
.track.main { margin: 4px 0; padding-top: 39px; border-radius: 7px; box-shadow: 0 0 0 1px #ccc; background: linear-gradient(90deg, #e2e2e2, #fff 50%, #fafafa); }

/* mockup canvas */
.canvas { flex: 1; min-width: 0; display: flex; padding-left: 11px; background: #e0eaf5; }
.sheet { position: relative; flex: 1; min-width: 0; overflow: hidden; border: solid #a8a8a8; border-width: 0 1px; background: #fff; }
.gutter { flex: none; width: 75px; }
.handle { display: flex; align-items: center; justify-content: center; width: 34px; height: 31px; background: #d7f7cf; box-shadow: 0 1px 2px #999; }
.item { position: absolute; white-space: nowrap; color: #222; }
.banner { left: 142px; top: 62px; width: 679px; height: 84px; border: 2px solid #222; background: #6f6; }
.logo { left: 142px; top: 62px; width: 130px; height: 42px; padding-left: 11px; font-size: 20px; line-height: 38px; color: #fff; border: 2px solid #222; background: #00f; }
.profile { left: 552px; top: 74px; font-size: 14px; line-height: 16px; color: #00f; text-decoration: underline; }
.welcome { left: 625px; top: 75px; font-size: 16px; line-height: 18px; }
.btn { border: 2px solid #222; background: #e6e6e6; text-align: center; }
.logout { left: 734px; top: 70px; width: 65px; height: 28px; font-size: 14px; border-radius: 12px; }
.lecture { left: 142px; top: 157px; font-size: 26px; line-height: 30px; color: #800000; }
.question { left: 142px; top: 198px; width: 686px; height: 68px; padding-left: 9px; font-size: 17px; line-height: 66px; color: #800000; border: 2px solid #222; }
.red { top: 274px; font-size: 14px; line-height: 16px; color: #f00; }
.roundno { left: 385px; }
.timer { left: 515px; }
.answer { top: 301px; height: 147px; font-size: 12px; border-radius: 16px; }
.first { left: 168px; width: 310px; }
.second { left: 488px; width: 309px; }
.skip { left: 419px; top: 452px; width: 125px; height: 53px; font-size: 20px; border-radius: 16px; }
.copy { left: 142px; top: 505px; font-size: 21px; line-height: 24px; }
.uva { left: 168px; top: 506px; font-size: 18px; line-height: 24px; }

/* taskbar */
.taskbar {
  flex: none;
  display: flex;
  gap: 4px;
  height: 39px;
  padding-bottom: 1px;
  color: #fff;
  font: 12px/17px "Open Sans", "Noto Sans", sans-serif;
  background:
    radial-gradient(ellipse 24px 30px at 722px 34px, #6e3450, transparent),
    radial-gradient(ellipse 60px 20px at 540px 14px, #3a59a4, transparent),
    radial-gradient(ellipse 60px 24px at 1060px 16px, #5b7598, transparent),
    linear-gradient(90deg, #26365c 0, #2c4274 60px, #3b62a6 170px, #2f56a0 230px, #41689f 280px, #2c519c 340px, #4862a0 400px, #3a4f86 480px, #3e4a6c 600px, #2c3656 690px, #2d3757 780px, #34466e 900px, #36578f 1010px, #3a5f97 1120px, #27428a 1130px, #283f7c 1200px, #2b3956 1240px, #2a3650);
}
.start, .task { flex: none; display: flex; align-items: center; justify-content: center; }
.start { width: 48px; }
.task { width: 58px; }
.task.open { border: 1px solid #98a5c4; background: rgba(180,195,225,.25); }
.task.current { border-color: #eef2fa; background: rgba(200,212,236,.5); }
.tray {
  display: flex;
  align-items: center;
  gap: 9px;
  margin-left: auto;
  padding-left: 48px;
  background:
    linear-gradient(90deg, transparent 50%, #2b3956 75%),
    radial-gradient(circle, rgba(110,140,210,.8) 0 1px, transparent 2px) 0 0 / 7px 7px;
}
.tray .bare { margin-right: 3px; }
.clock { width: 78px; padding-top: 1px; display: flex; flex-direction: column; justify-content: center; align-items: center; }
```
